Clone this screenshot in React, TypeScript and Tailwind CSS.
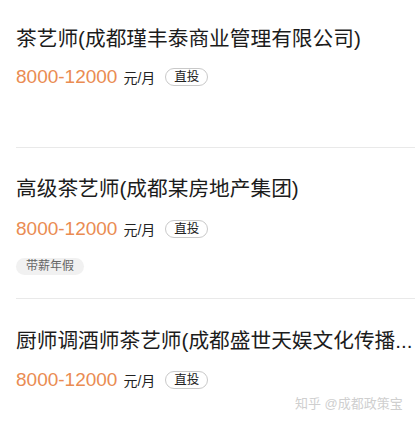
import React from "react";

type Job = {
  title: string;
  pt: string;
  mt: string;
  tags?: string[];
  pb: string;
  divider: boolean;
};

const jobs: Job[] = [
  {
    title: "茶艺师(成都瑾丰泰商业管理有限公司)",
    pt: "pt-[25px]",
    mt: "mt-[12px]",
    pb: "pb-[58px]",
    divider: true,
  },
  {
    title: "高级茶艺师(成都某房地产集团)",
    pt: "pt-[27px]",
    mt: "mt-[14px]",
    tags: ["带薪年假"],
    pb: "pb-[23px]",
    divider: true,
  },
  {
    title: "厨师调酒师茶艺师(成都盛世天娱文化传播...",
    pt: "pt-[28px]",
    mt: "mt-[13px]",
    pb: "pb-[20px]",
    divider: false,
  },
];

function JobItem({ job }: { job: Job }) {
  return (
    <div
      className={`${job.pt} ${job.pb} ${
        job.divider ? "border-b border-[#e9e9e9]" : ""
      }`}
    >
      <div className="text-[20.7px] leading-[28px] text-[#1c1c1c] whitespace-nowrap overflow-hidden">
        {job.title}
      </div>
      <div className={`${job.mt} flex items-center h-[24px]`}>
        <span className="leading-[24px] whitespace-nowrap">
          <span className="text-[19px] text-[#ea8c52]">8000-12000</span>
          <span className="ml-[6px] text-[14px] text-[#222]">元/月</span>
        </span>
        <span className="ml-[10px] px-[8px] border border-[#c9c9c9] rounded-full text-[12.5px] leading-[16px] text-[#222]">
          直投
        </span>
      </div>
      {job.tags && (
        <div className="mt-[17px] flex gap-2">
          {job.tags.map((t) => (
            <span
              key={t}
              className="px-[10px] h-[17px] rounded-full bg-[#f1f1f1] text-[12px] leading-[17px] text-[#666]"
            >
              {t}
            </span>
          ))}
        </div>
      )}
    </div>
  );
}

export default function App() {
  return (
    <div className="relative w-[415px] h-[423px] overflow-hidden bg-white font-['Liberation_Sans','Noto_Sans_CJK_SC',sans-serif]">
      <div className="ml-4">
        {jobs.map((j, i) => (
          <JobItem key={i} job={j} />
        ))}
      </div>
      <div className="absolute left-[295px] top-[396px] text-[13px] leading-[16px] text-[#cfcfcf] whitespace-nowrap">
        知乎 @成都政策宝
      </div>
    </div>
  );
}
